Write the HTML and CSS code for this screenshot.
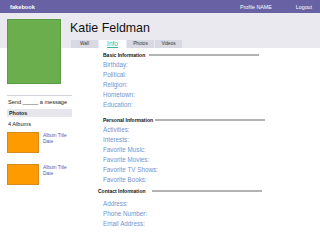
FILE: index.html
```html
<!DOCTYPE html>
<html lang="en">
  <head>
    <meta charset="UTF-8" />
    <title>fakebook - Katie Feldman</title>
    <link rel="stylesheet" href="styles.css">
  </head>
  <body>
    <div class="topbar">
      <span class="logo">fakebook</span>
      <div class="top-links">
        <span>Profile NAME</span>
        <span>Logout</span>
      </div>
    </div>

    <div class="page">
      <div class="sidebar">
        <div class="profile-pic"></div>
        <div class="send">Send _____ a message</div>
        <div class="photos-head">Photos</div>
        <div class="album-count">4 Albums</div>
        <div class="album">
          <div class="album-cover"></div>
          <div class="album-text">Album Title<br />Date</div>
        </div>
        <div class="album">
          <div class="album-cover"></div>
          <div class="album-text">Album Title<br />Date</div>
        </div>
      </div>

      <div class="main">
        <h1 class="name">Katie Feldman</h1>
        <div class="tabs">
          <span class="tab">Wall</span>
          <span class="tab active">Info</span>
          <span class="tab">Photos</span>
          <span class="tab">Videos</span>
        </div>

        <div class="info">
          <div class="section-head basic"><span>Basic Information</span><i class="rule"></i></div>
          <div class="field">Birthday:</div>
          <div class="field">Political:</div>
          <div class="field">Religion:</div>
          <div class="field">Hometown:</div>
          <div class="field">Education:</div>

          <div class="section-head personal"><span>Personal Information</span><i class="rule"></i></div>
          <div class="field">Activities:</div>
          <div class="field">Interests:</div>
          <div class="field">Favorite Music:</div>
          <div class="field">Favorite Movies:</div>
          <div class="field">Favorite TV Shows:</div>
          <div class="field">Favorite Books:</div>

          <div class="section-head contact"><span>Contact Information</span><i class="rule"></i></div>
          <div class="contact-fields">
            <div class="field">Address:</div>
            <div class="field">Phone Number:</div>
            <div class="field">Email Address:</div>
          </div>
        </div>
      </div>
    </div>
  </body>
</html>
```

FILE: styles.css
```css
body {
  margin: 0;
  width: 320px;
  height: 240px;
  overflow: hidden;
  font-family: 'Liberation Sans', Arial, sans-serif;
  background-color: #fff;
  color: #222;
}

.topbar {
  height: 13px;
  background-color: #6862a4;
  color: #fff;
  display: flex;
  align-items: center;
  justify-content: space-between;
  padding: 0 8px 0 10px;
  font-size: 5.3px;
}

.logo {
  font-weight: bold;
  font-size: 5.7px;
}

.top-links {
  display: flex;
  gap: 24px;
}

.page {
  display: flex;
  background: linear-gradient(to bottom, #e9e9ef 35px, #fff 35px);
  min-height: 227px;
}

/* left column */
.sidebar {
  flex: none;
  width: 63px;
  margin-left: 7px;
}

.profile-pic {
  width: 52px;
  height: 63px;
  margin-top: 6px;
  background-color: #6aae4e;
  border: 1px solid #5b9944;
}

.send {
  margin: 11px -2px 0 0;
  padding: 3px 0 4px 1px;
  border-top: 1px solid #d4d4dc;
  font-size: 5.6px;
  line-height: 6px;
}

.photos-head {
  margin-right: -2px;
  height: 8px;
  line-height: 8px;
  padding-left: 2px;
  background-color: #e6e6ec;
  font-weight: bold;
  font-size: 5.4px;
}

.album-count {
  font-size: 5.6px;
  line-height: 6px;
  margin-top: 4px;
  padding-left: 1px;
}

.album {
  display: flex;
  gap: 4px;
  margin-top: 5px;
}

.album + .album {
  margin-top: 11px;
}

.album-cover {
  flex: none;
  width: 30px;
  height: 19px;
  background-color: #fd9b00;
  border: 1px solid #d68a1e;
}

.album-text {
  font-size: 4.8px;
  line-height: 6px;
  color: #5656b8;
  padding-top: 1px;
}

/* right column */
.main {
  flex: 1;
}

.name {
  margin: 7.5px 0 0;
  font-size: 12.4px;
  line-height: 15px;
  font-weight: normal;
  color: #111;
}

.tabs {
  display: flex;
  gap: 1px;
  margin: 4.5px 0 0 1px;
}

.tab {
  width: 27px;
  height: 8px;
  line-height: 8px;
  text-align: center;
  background-color: #d9d9e3;
  font-size: 4.7px;
  color: #333;
}

.tab.active {
  background-color: #fff;
  color: #3db39c;
  font-size: 6.5px;
  text-decoration: underline;
}

.info {
  padding: 2.5px 0 0 33px;
}

.section-head {
  display: flex;
  align-items: center;
  height: 9px;
  font-size: 5px;
  font-weight: bold;
  color: #111;
}

.section-head .rule {
  width: 110px;
  height: 2px;
  background-color: #b2b2b2;
  margin-left: 4px;
}

.section-head.personal {
  margin-top: 6.3px;
}

.section-head.personal .rule {
  margin-left: 2px;
}

.section-head.contact {
  margin: 1.7px 0 0 -5px;
}

.section-head.contact .rule {
  margin-left: 6px;
}

.contact-fields {
  margin-top: 3.5px;
}

.field {
  height: 10px;
  line-height: 10px;
  font-size: 6.3px;
  color: #7194cf;
}
```
